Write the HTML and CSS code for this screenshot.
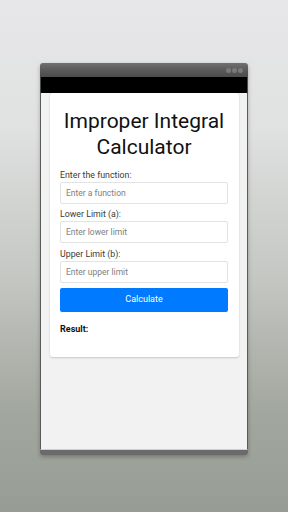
FILE: index.html
```html
<!DOCTYPE html>
<html>
<head>
<meta charset="utf-8">
<link rel="stylesheet" href="styles.css">
</head>
<body>
<div class="window">
  <div class="titlebar">
    <span class="dot"></span><span class="dot"></span><span class="dot"></span>
  </div>
  <div class="statusbar"></div>
  <div class="screen">
    <div class="card">
      <h1 class="title">Improper Integral Calculator</h1>
      <div class="group">
        <label class="label">Enter the function:</label>
        <div class="input">Enter a function</div>
      </div>
      <div class="group">
        <label class="label">Lower Limit (a):</label>
        <div class="input">Enter lower limit</div>
      </div>
      <div class="group">
        <label class="label">Upper Limit (b):</label>
        <div class="input">Enter upper limit</div>
      </div>
      <div class="button">Calculate</div>
      <div class="result">Result:</div>
    </div>
  </div>
  <div class="bottom"></div>
</div>
</body>
</html>
```
FILE: styles.css
```css
html, body {
  margin: 0;
  padding: 0;
  height: 512px;
  overflow: hidden;
}
body {
  background: linear-gradient(180deg, #e7e7e9 0%, #e0e1e1 25%, #c3c6c1 55%, #a2a79f 80%, #979c94 100%);
  font-family: Roboto, "Noto Sans", sans-serif;
  padding-top: 63px;
  box-sizing: border-box;
}
.window {
  margin-left: 40px;
  width: 208px;
  box-shadow: 0 2px 4px rgba(0,0,0,0.25);
  border-radius: 3px;
}
.titlebar {
  height: 14px;
  background: linear-gradient(180deg, #707070 0%, #5a5a5a 50%, #4c4c4c 100%);
  border-radius: 3px 3px 0 0;
  display: flex;
  justify-content: flex-end;
  align-items: center;
  gap: 1px;
  padding-right: 5px;
}
.dot {
  width: 5px;
  height: 5px;
  border-radius: 50%;
  background: #7a7a7a;
}
.statusbar {
  height: 16px;
  background: #000;
  border-left: 1.5px solid #4a4a4a;
  border-right: 1.5px solid #4a4a4a;
}
.screen {
  height: 356px;
  background: #f2f2f2;
  border-left: 1.5px solid #5a5a5a;
  border-right: 1.5px solid #5a5a5a;
  border-bottom: 1px solid #cfcfcf;
  padding: 0 8.5px;
}
.bottom {
  height: 5px;
  background: #6a6a6a;
  border-radius: 0 0 3px 3px;
}
.card {
  background: #fff;
  border-radius: 3px;
  box-shadow: 0 0.5px 2px rgba(0,0,0,0.18);
  padding: 14.5px 10.5px 0 10.5px;
  height: 263.7px;
  box-sizing: border-box;
}
.title {
  margin: 0 0 9.8px 0;
  font-weight: 400;
  font-size: 21px;
  line-height: 26.3px;
  text-align: center;
  color: #111;
}
.group {
  margin-bottom: 5.4px;
}
.label {
  display: block;
  font-size: 8.8px;
  line-height: 10px;
  margin-bottom: 2px;
  color: #3a3a3a;
}
.input {
  height: 22px;
  box-sizing: border-box;
  border: 1px solid #e3e3e3;
  border-radius: 2px;
  padding-left: 5px;
  font-size: 8.5px;
  line-height: 20px;
  color: #808080;
}
.button {
  height: 23.6px;
  background: #007bff;
  border-radius: 2px;
  color: #fff;
  font-size: 9px;
  line-height: 23.6px;
  text-align: center;
}
.result {
  margin-top: 12.5px;
  font-size: 9px;
  font-weight: 700;
  color: #111;
}
```
